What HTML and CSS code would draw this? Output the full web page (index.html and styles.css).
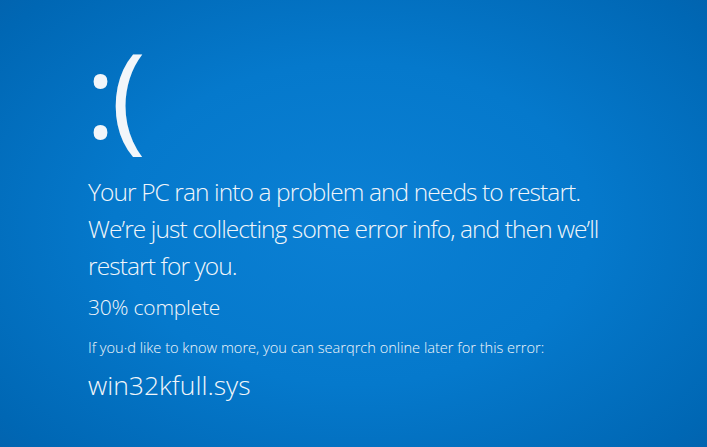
FILE: index.html
```html
<!DOCTYPE html>
<html>
<head>
<meta charset="utf-8">
<link rel="stylesheet" href="styles.css">
</head>
<body>
<main class="screen">
  <div class="face">:(</div>
  <p class="message">Your PC ran into a problem and needs to restart.<br>We’re just collecting some error info, and then we’ll<br>restart for you.</p>
  <p class="progress">30% complete</p>
  <p class="info">If you·d like to know more, you can searqrch online later for this error:</p>
  <p class="code">win32kfull.sys</p>
</main>
</body>
</html>
```
FILE: styles.css
```css
html, body {
  margin: 0;
  padding: 0;
  width: 707px;
  height: 447px;
  overflow: hidden;
}
.screen {
  box-sizing: border-box;
  width: 707px;
  height: 447px;
  padding: 28px 0 0 88px;
  background: radial-gradient(ellipse 75% 80% at 50% 50%, #0b80d4 0%, #0579cc 45%, #0067b4 85%, #0460aa 100%);
  color: #f2f6fa;
  font-family: "Open Sans", "Noto Sans", sans-serif;
  font-weight: 300;
}
.face {
  margin-left: -3px;
  font-size: 118px;
  font-weight: 400;
  line-height: 130px;
  letter-spacing: -5px;
}
.message {
  margin: 15px 0 0;
  font-size: 24.5px;
  line-height: 37px;
  letter-spacing: -0.9px;
}
.progress {
  margin: 10px 0 0;
  font-size: 21px;
  line-height: 26px;
  letter-spacing: -0.2px;
}
.info {
  margin: 17px 0 0;
  font-size: 14.6px;
  line-height: 20px;
}
.code {
  margin: 11px 0 0;
  font-size: 26.5px;
  line-height: 34px;
}
```
